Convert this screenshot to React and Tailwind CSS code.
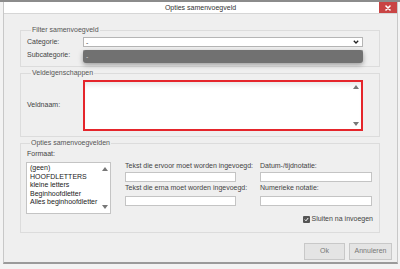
import React from 'react';

const font = { fontFamily: '"Liberation Sans", Arial, sans-serif' };

const ArrowUp = () => (
  <svg width="6" height="4" viewBox="0 0 6 4"><path d="M0 4 L3 0 L6 4 Z" fill="#777" /></svg>
);
const ArrowDown = () => (
  <svg width="6" height="4" viewBox="0 0 6 4"><path d="M0 0 L6 0 L3 4 Z" fill="#777" /></svg>
);

const Legend = ({ children }) => (
  <legend className="ml-[4px] px-[1px] text-[7px] leading-[8px] text-[#555]">{children}</legend>
);

const TextInput = () => (
  <div className="h-[10px] w-full border border-[#c4c4c4] bg-white" />
);

export default function App() {
  const formats = ['(geen)', 'HOOFDLETTERS', 'kleine letters', 'Beginhoofdletter', 'Alles beginhoofdletter'];

  return (
    <div className="w-[400px] h-[269px] overflow-hidden bg-[#f3f3f3] flex flex-col" style={font}>
      <div className="h-[2px] shrink-0 bg-[#8c8c8c]" />
      <div className="ml-[3px] w-[395px] h-[262px] shrink-0 border-x border-b-2 border-x-[#c8c8c8] border-b-[#9a9a9a] bg-[#efefef] flex flex-col">
        {/* title bar */}
        <div className="relative h-[12px] shrink-0 bg-white border-b border-[#d6d6d6] flex items-center justify-center">
          <span className="text-[7px] leading-[8px] text-[#333]">Opties samenvoegveld</span>
          <div className="absolute right-0 top-0 w-[18px] h-[11px] bg-[#c94444] flex items-center justify-center">
            <svg width="6" height="6" viewBox="0 0 6 6">
              <path d="M1 1 L5 5 M5 1 L1 5" stroke="white" strokeWidth="1.6" strokeLinecap="round" />
            </svg>
          </div>
        </div>

        <div className="pl-[16px] pr-[17px] pt-[12px] flex flex-col">
          {/* Filter samenvoegveld */}
          <fieldset className="relative h-[41px] border border-[#dcdcdc] pl-[6px] pr-[16px] pt-[3px]">
            <Legend>Filter samenvoegveld</Legend>
            <div className="flex items-center h-[10px]">
              <span className="w-[56px] text-[7px] text-[#444]">Categorie:</span>
              <div className="flex-1 h-[10px] border border-[#b5b5b5] bg-white flex items-center justify-between pl-[2px] pr-[3px]">
                <span className="text-[7px] leading-none text-[#444]">-</span>
                <svg width="6" height="4" viewBox="0 0 6 4">
                  <path d="M0.8 0.8 L3 3 L5.2 0.8" stroke="#222" strokeWidth="1.3" fill="none" />
                </svg>
              </div>
            </div>
            <div className="flex items-center h-[10px] mt-[3px]">
              <span className="w-[56px] text-[7px] text-[#444]">Subcategorie:</span>
              <div className="relative flex-1 h-[10px] border border-[#b5b5b5] bg-white">
                <div className="absolute left-[-1px] right-[-1px] top-[-1px] h-[13px] rounded-[3px] bg-[#717171] shadow-[0_2px_5px_rgba(0,0,0,0.35)] flex items-center pl-[3px]">
                  <span className="text-[7px] leading-none text-[#d8d8d8]">-</span>
                </div>
              </div>
            </div>
          </fieldset>

          {/* Veldeigenschappen */}
          <fieldset className="mt-[2px] h-[68px] border border-[#dcdcdc] pl-[6px] pr-[16px] pt-[3px]">
            <Legend>Veldeigenschappen</Legend>
            <div className="flex items-center">
              <span className="w-[56px] text-[7px] text-[#444]">Veldnaam:</span>
              <div className="flex-1 h-[51px] border-2 border-[#e5252b] bg-white shadow-[inset_0_6px_6px_-4px_rgba(0,0,0,0.12)] flex flex-col items-end justify-between pr-[2px] py-[3px]">
                <ArrowUp />
                <ArrowDown />
              </div>
            </div>
          </fieldset>

          {/* Opties samenvoegvelden */}
          <fieldset className="mt-[2px] h-[94px] border border-[#dcdcdc] pl-[5px] pr-[6px] pt-[3px]">
            <Legend>Opties samenvoegvelden</Legend>
            <div className="text-[7px] leading-[8px] text-[#444] pl-[1px]">Formaat:</div>
            <div className="flex mt-[4px]">
              <div className="w-[85px] h-[52px] border border-[#c4c4c4] bg-white flex pl-[3px] pr-[2px] py-[1px]">
                <div className="flex-1 flex flex-col">
                  {formats.map((f) => (
                    <div key={f} className="text-[7px] leading-[8.6px] text-[#222]">{f}</div>
                  ))}
                </div>
                <div className="flex flex-col justify-between items-center py-[3px]">
                  <ArrowUp />
                  <ArrowDown />
                </div>
              </div>
              <div className="ml-[14px] w-[111px] flex flex-col">
                <div className="text-[7px] leading-[8px] text-[#444] whitespace-nowrap">Tekst die ervoor moet worden ingevoegd:</div>
                <div className="mt-[2px]"><TextInput /></div>
                <div className="mt-[2px] text-[7px] leading-[8px] text-[#444] whitespace-nowrap">Tekst die erna moet worden ingevoegd:</div>
                <div className="mt-[4px]"><TextInput /></div>
              </div>
              <div className="ml-[24px] w-[112px] flex flex-col">
                <div className="text-[7px] leading-[8px] text-[#444]">Datum-/tijdnotatie:</div>
                <div className="mt-[2px]"><TextInput /></div>
                <div className="mt-[2px] text-[7px] leading-[8px] text-[#444]">Numerieke notatie:</div>
                <div className="mt-[4px]"><TextInput /></div>
              </div>
            </div>
            <div className="flex items-center justify-end gap-[2px] mt-[1px]">
              <div className="w-[7px] h-[7px] rounded-[1px] bg-[#555] flex items-center justify-center">
                <svg width="5" height="5" viewBox="0 0 5 5">
                  <path d="M0.8 2.6 L2 3.8 L4.2 1" stroke="white" strokeWidth="1" fill="none" />
                </svg>
              </div>
              <span className="text-[7px] leading-[8px] text-[#444]">Sluiten na invoegen</span>
            </div>
          </fieldset>
        </div>

        <div className="mt-[10px] flex justify-end gap-[4px] pr-[5px]">
          <button className="w-[41px] h-[17px] border border-[#c8c8c8] bg-[#e4e4e4] text-[7px] text-[#777]">Ok</button>
          <button className="w-[43px] h-[17px] border border-[#c8c8c8] bg-[#e4e4e4] text-[7px] text-[#777]">Annuleren</button>
        </div>
      </div>
    </div>
  );
}
